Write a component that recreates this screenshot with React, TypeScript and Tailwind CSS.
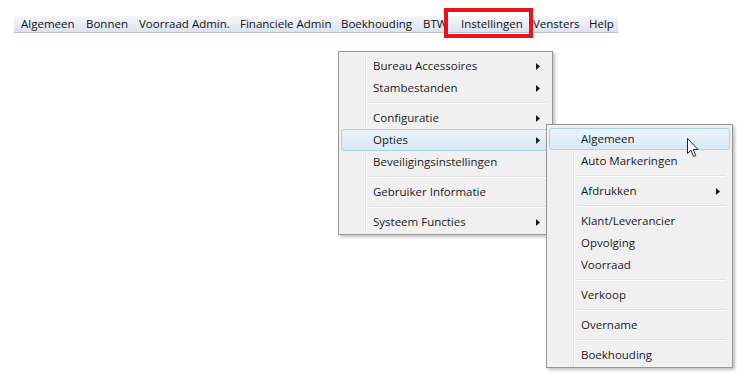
import React from "react";

const font = { fontFamily: '"Open Sans", "Noto Sans", sans-serif' };

type Item = { label: string; arrow?: boolean; hi?: boolean } | "sep";

const mainItems: Item[] = [
  { label: "Bureau Accessoires", arrow: true },
  { label: "Stambestanden", arrow: true },
  "sep",
  { label: "Configuratie", arrow: true },
  { label: "Opties", arrow: true, hi: true },
  { label: "Beveiligingsinstellingen" },
  "sep",
  { label: "Gebruiker Informatie" },
  "sep",
  { label: "Systeem Functies", arrow: true },
];

const subItems: Item[] = [
  { label: "Algemeen", hi: true },
  { label: "Auto Markeringen" },
  "sep",
  { label: "Afdrukken", arrow: true },
  "sep",
  { label: "Klant/Leverancier" },
  { label: "Opvolging" },
  { label: "Voorraad" },
  "sep",
  { label: "Verkoop" },
  "sep",
  { label: "Overname" },
  "sep",
  { label: "Boekhouding" },
];

function Arrow() {
  return (
    <svg width="4" height="7" viewBox="0 0 4 7" className="absolute right-[9px] top-[7px]">
      <path d="M0 0 L4 3.5 L0 7 Z" fill="#1a1a1a" />
    </svg>
  );
}

function Menu({ items, className }: { items: Item[]; className: string }) {
  return (
    <div
      className={`absolute bg-[#f0f0f0] border border-[#979797] pt-[3px] pb-[1px] px-[2px] shadow-[2px_2px_3px_rgba(0,0,0,0.25)] ${className}`}
    >
      <div className="absolute left-[26px] top-[2px] bottom-[2px] w-[2px] border-l border-[#e2e3e3] bg-white" />
      {items.map((it, i) =>
        it === "sep" ? (
          <div key={i} className="relative h-[8px] flex items-center pl-[28px] pr-[4px]">
            <div className="w-full h-[2px] border-t border-[#e0e0e0] bg-white" />
          </div>
        ) : (
          <div
            key={i}
            className={`relative h-[22px] flex items-center pl-[31px] text-[11.5px] text-[#1b1b1b] rounded-[3px] ${
              it.hi
                ? "border border-[#a8d3ea] bg-gradient-to-b from-[#eaf3fa] to-[#d9e9f5]"
                : "border border-transparent"
            }`}
            style={font}
          >
            {it.label}
            {it.arrow && <Arrow />}
          </div>
        )
      )}
    </div>
  );
}

const bar = [
  { l: "Algemeen", w: "w-[65px]" },
  { l: "Bonnen", w: "w-[53px]" },
  { l: "Voorraad Admin.", w: "w-[101px]" },
  { l: "Financiele Admin", w: "w-[101px]" },
  { l: "Boekhouding", w: "w-[82px]" },
  { l: "BTW", w: "w-[38px]" },
  { l: "Instellingen", w: "w-[72px]" },
  { l: "Vensters", w: "w-[56px]" },
  { l: "Help", w: "w-[29px]" },
];

export default function App() {
  return (
    <div className="relative w-[747px] h-[383px] bg-white overflow-hidden" style={font}>
      <div className="pt-[16px] pl-[14px]">
        <div className="flex h-[17px] w-[604px] items-center pl-[7px] bg-gradient-to-b from-[#f5f7fb] to-[#dce3ed] border-b border-[#b9c2cf] text-[11.5px] text-[#111]">
          {bar.map((b) => (
            <div key={b.l} className={`${b.w} whitespace-nowrap leading-[16px]`}>
              {b.l}
            </div>
          ))}
        </div>
      </div>

      {/* red highlight box */}
      <div className="absolute left-[444px] top-[8px] w-[89px] h-[30px] border-[4px] border-[#e8141b]" />

      <Menu items={mainItems} className="left-[338px] top-[51px] w-[215px]" />
      <Menu items={subItems} className="left-[546px] top-[124px] w-[187px]" />

      {/* cursor */}
      <svg width="13" height="20" viewBox="0 0 13 20" className="absolute left-[687px] top-[138px]">
        <path
          d="M0.5 0.5 L0.5 15.5 L4 12.2 L6.6 18.5 L8.8 17.6 L6.3 11.5 L11 11.5 Z"
          fill="#ffffff"
          stroke="#222"
          strokeWidth="1"
          strokeLinejoin="round"
        />
      </svg>
    </div>
  );
}
